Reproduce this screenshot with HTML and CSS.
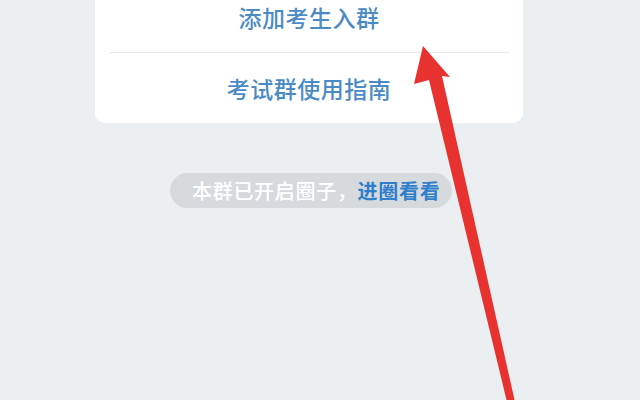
FILE: index.html
```html
<!DOCTYPE html>
<html lang="zh">
<head>
<meta charset="utf-8">
<link rel="stylesheet" href="styles.css">
</head>
<body>
<div class="screen">
  <div class="card">
    <div class="row">添加考生入群</div>
    <div class="divider"></div>
    <div class="row">考试群使用指南</div>
  </div>
  <div class="notice-wrap">
    <div class="notice">本群已开启圈子，<span class="link">进圈看看</span></div>
  </div>
  <svg class="arrow" width="640" height="400" viewBox="0 0 640 400">
    <polygon points="423,46 414,84 429,80 507,402 515,402 442,76 450,77" fill="#e8322f"/>
  </svg>
</div>
</body>
</html>
```
FILE: styles.css
```css
html, body {
  margin: 0;
  padding: 0;
}
body {
  background: #eceff1;
  font-family: "Noto Sans CJK SC", "Noto Sans", sans-serif;
  overflow: hidden;
}
.screen {
  position: relative;
  width: 640px;
  height: 400px;
  overflow: hidden;
}
.card {
  margin: -18px 0 0 95px;
  width: 428px;
  background: #ffffff;
  border-radius: 10px;
  display: flex;
  flex-direction: column;
}
.row {
  height: 70px;
  display: flex;
  align-items: center;
  justify-content: center;
  font-size: 23px;
  font-weight: 500;
  color: #4a8bc5;
  letter-spacing: 0.5px;
}
.divider {
  height: 1px;
  background: #e6e8ea;
  margin: 0 14px;
}
.notice-wrap {
  display: flex;
  padding: 50px 0 0 170px;
}
.notice {
  height: 35px;
  display: flex;
  align-items: center;
  padding: 0 12px 0 22px;
  border-radius: 18px;
  background: #d6dadd;
  color: #ffffff;
  font-size: 20px;
  font-weight: 500;
  letter-spacing: 0.7px;
}
.link {
  color: #2f7fcd;
  font-weight: bold;
}
.arrow {
  position: absolute;
  left: 0;
  top: 0;
}
```
